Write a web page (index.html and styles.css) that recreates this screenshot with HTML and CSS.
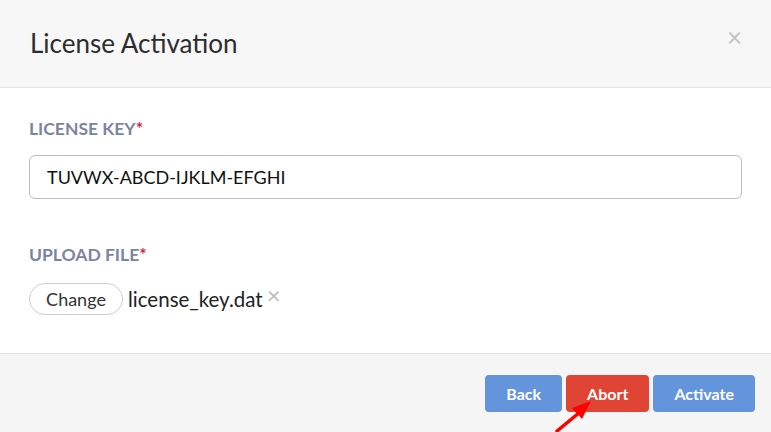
FILE: index.html
```html
<!DOCTYPE html>
<html>
<head>
<meta charset="utf-8">
<link rel="stylesheet" href="styles.css">
</head>
<body>
<div class="modal">
  <div class="header">
    <h1 class="title">License Activation</h1>
    <span class="close">×</span>
  </div>
  <div class="content">
    <div class="field">
      <div class="label">LICENSE KEY<span class="req">*</span></div>
      <div class="input">TUVWX-ABCD-IJKLM-EFGHI</div>
    </div>
    <div class="field upload">
      <div class="label">UPLOAD FILE<span class="req">*</span></div>
      <div class="file-row">
        <span class="change">Change</span>
        <span class="filename">license_key.dat</span>
        <span class="remove">×</span>
      </div>
    </div>
  </div>
  <div class="footer">
    <span class="btn blue">Back</span>
    <span class="btn red">Abort</span>
    <span class="btn blue">Activate</span>
    <svg class="arrow" width="50" height="44" viewBox="0 0 50 44">
      <line x1="5" y1="39" x2="28" y2="20" stroke="#ff0000" stroke-width="3.5" stroke-linecap="round"/>
      <polygon points="39,9 20,16 30,27" fill="#ff0000"/>
    </svg>
  </div>
</div>
</body>
</html>
```
FILE: styles.css
```css
html, body {
  margin: 0;
  padding: 0;
}
body {
  width: 771px;
  height: 432px;
  overflow: hidden;
  font-family: Lato, "Liberation Sans", sans-serif;
  background: #ffffff;
}
.modal {
  display: flex;
  flex-direction: column;
  height: 432px;
}
.header {
  height: 88px;
  background: #f7f7f7;
  border-bottom: 1px solid #e6e6e6;
  display: flex;
  align-items: center;
  justify-content: space-between;
  padding: 0 30px;
  box-sizing: border-box;
  flex: none;
}
.title {
  margin: 0;
  font-size: 26px;
  font-weight: 400;
  color: #2d2d2d;
  margin-top: -2px;
}
.close {
  font-size: 26px;
  color: #c4c4c4;
  margin-right: -1px;
  margin-top: -14px;
}
.content {
  flex: 1;
  padding: 30px 29px 0 29px;
  box-sizing: border-box;
}
.label {
  font-size: 17.5px;
  font-weight: 700;
  color: #7c84a0;
  line-height: 22px;
}
.req {
  color: #d9224a;
}
.input {
  margin-top: 15px;
  height: 44px;
  border: 1px solid #b9bccd;
  border-radius: 6px;
  box-sizing: border-box;
  padding: 0 17px;
  display: flex;
  align-items: center;
  font-size: 18px;
  color: #111;
}
.upload {
  margin-top: 45px;
}
.file-row {
  margin-top: 17px;
  display: flex;
  align-items: center;
}
.change {
  display: inline-flex;
  align-items: center;
  justify-content: center;
  width: 94px;
  height: 32px;
  box-sizing: border-box;
  border: 1px solid #cfcfcf;
  border-radius: 16px;
  font-size: 18px;
  color: #333;
}
.filename {
  margin-left: 5px;
  font-size: 20.5px;
  color: #222;
}
.remove {
  margin-left: 4px;
  font-size: 24px;
  color: #bdbdbd;
  margin-top: -10px;
}
.footer {
  position: relative;
  height: 79px;
  flex: none;
  background: #f5f5f5;
  border-top: 1px solid #e2e2e2;
  box-sizing: border-box;
  display: flex;
  justify-content: flex-end;
  align-items: flex-start;
  padding: 21px 16px 0 0;
  gap: 4px;
}
.btn {
  display: inline-flex;
  align-items: center;
  justify-content: center;
  height: 37px;
  padding: 0 21px;
  border-radius: 4px;
  font-size: 16px;
  font-weight: 700;
  color: #fff;
}
.blue {
  background: #6494dc;
}
.red {
  background: #e04434;
}
.arrow {
  position: absolute;
  left: 552px;
  top: 38px;
}
```
